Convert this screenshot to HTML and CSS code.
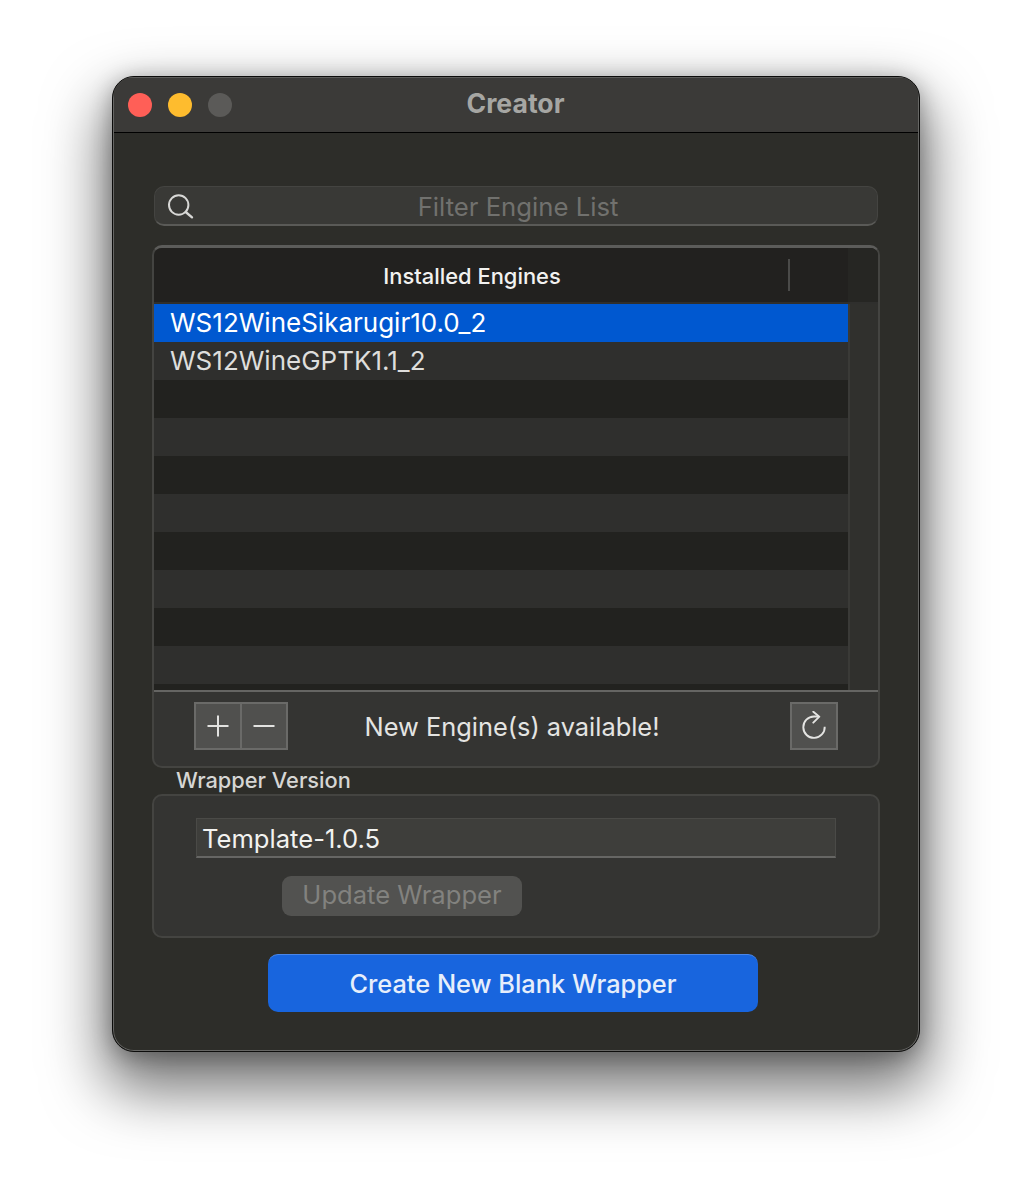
FILE: index.html
```html
<!DOCTYPE html>
<html lang="en">
<head>
<meta charset="utf-8">
<title>Creator</title>
<link rel="stylesheet" href="styles.css">
</head>
<body>
<div class="window">
  <header class="titlebar">
    <div class="lights">
      <span class="light red"></span>
      <span class="light yellow"></span>
      <span class="light gray"></span>
    </div>
    <div class="title">Creator</div>
  </header>
  <main class="content">
    <div class="search">
      <svg class="search-icon" width="28" height="28" viewBox="0 0 28 28" fill="none" stroke="#d8d8d6" stroke-width="2">
        <circle cx="11.7" cy="13" r="9.7"/>
        <path d="M18.7 20 L25 25.3" stroke-width="2.4" stroke-linecap="round"/>
      </svg>
      <span class="search-text">Filter Engine List</span>
    </div>
    <section class="engines">
      <div class="table">
        <div class="thead">
          <div class="th">Installed Engines</div>
          <div class="th-sep"></div>
          <div class="th-corner"></div>
        </div>
        <div class="tbody">
          <div class="rows">
            <div class="row selected">WS12WineSikarugir10.0_2</div>
            <div class="row alt">WS12WineGPTK1.1_2</div>
            <div class="row"></div>
            <div class="row alt"></div>
            <div class="row"></div>
            <div class="row alt"></div>
            <div class="row"></div>
            <div class="row alt"></div>
            <div class="row"></div>
            <div class="row alt"></div>
            <div class="row short"></div>
          </div>
          <div class="scroll-track"></div>
        </div>
      </div>
      <div class="tfoot">
        <div class="segment">
          <button class="seg-btn">
            <svg width="24" height="24" viewBox="0 0 24 24" stroke="#e2e2e0" stroke-width="2" fill="none"><path d="M1.5 12H22.5M12 1.5V22.5"/></svg>
          </button>
          <button class="seg-btn">
            <svg width="24" height="24" viewBox="0 0 24 24" stroke="#e2e2e0" stroke-width="2" fill="none"><path d="M1.5 12H22.5"/></svg>
          </button>
        </div>
        <div class="avail">New Engine(s) available!</div>
        <button class="refresh">
          <svg width="26" height="30" viewBox="0 0 26 30" fill="none" stroke="#e4e4e2" stroke-width="1.9">
            <path d="M18 5.5 H13 A10.7 10.7 0 1 0 23.7 15.7"/>
            <path d="M12.3 0.7 L18.3 5.7 L12.3 11.7" stroke-linecap="round" stroke-linejoin="round"/>
          </svg>
        </button>
      </div>
    </section>
    <div class="group-label">Wrapper Version</div>
    <section class="wrapper-box">
      <div class="version">Template-1.0.5</div>
      <button class="update">Update Wrapper</button>
    </section>
    <button class="create">Create New Blank Wrapper</button>
  </main>
</div>
</body>
</html>
```
FILE: styles.css
```css
* { box-sizing: border-box; }
html, body { margin: 0; height: 1200px; overflow: hidden; background: #fff; }
body {
  padding: 76px 112px 148px;
  font-family: Inter, "Liberation Sans", sans-serif;
}
button { font-family: inherit; padding: 0; margin: 0; }

.window {
  width: 808px;
  height: 976px;
  border: 1px solid #0c0c0b;
  border-radius: 22px;
  background: #2d2d29;
  box-shadow:
    inset 0 0 0 1px #666664,
    0 30px 60px 8px rgba(0,0,0,.55),
    0 4px 22px rgba(0,0,0,.3);
  overflow: hidden;
  display: flex;
  flex-direction: column;
}
.titlebar {
  height: 56px;
  flex: none;
  background: #3b3a38;
  border-top: 1px solid #5c5c5a;
  border-bottom: 1px solid #000;
  margin: 0 1px;
  display: flex;
  align-items: center;
  position: relative;
}
.lights { display: flex; gap: 16px; padding-left: 14px; margin-top: -1px; }
.light { width: 24px; height: 24px; border-radius: 50%; }
.red { background: #ff5f57; }
.yellow { background: #febc2e; }
.gray { background: #5b5a58; }
.title {
  position: absolute;
  left: 0; right: 0; top: 10px;
  text-align: center;
  padding-right: 1px;
  font-size: 26.6px;
  line-height: 30px;
  font-weight: 700;
  color: #a6a6a3;
}
.content {
  flex: 1;
  padding: 53px 0 0 39px;
  display: flex;
  flex-direction: column;
  align-items: flex-start;
}

.search {
  width: 724px;
  height: 40px;
  margin-left: 2px;
  border-radius: 10px;
  background: #393936;
  border: 1px solid #444441;
  border-bottom: 2px solid #5a5a57;
  display: flex;
  align-items: center;
  position: relative;
}
.search-icon { position: absolute; left: 12px; top: 5px; }
.search-text {
  width: 100%;
  text-align: center;
  padding-left: 4px;
  margin-top: 2px;
  font-size: 25.7px;
  color: #71716e;
}

.engines {
  width: 728px;
  height: 523px;
  margin-top: 19px;
  border: 2px solid #444441;
  border-top: 3px solid #5c5c5a;
  border-bottom: 2px solid #444441;
  border-radius: 10px;
  background: #343432;
  overflow: hidden;
  display: flex;
  flex-direction: column;
}
.table { flex: none; height: 444px; display: flex; flex-direction: column; border-bottom: 2px solid #656563; }
.thead {
  height: 56px;
  flex: none;
  background: #22211f;
  border-bottom: 2px solid #2f2f2d;
  display: flex;
  align-items: center;
}
.th {
  width: 636px;
  margin-top: 2px;
  text-align: center;
  font-size: 21.9px;
  font-weight: 500;
  color: #f2f2f0;
}
.th-sep { width: 2px; height: 32px; margin-left: -2px; background: #4b4b49; }
.th-corner { flex: 1; align-self: stretch; margin-left: 58px; background: #262623; }
.tbody { flex: 1; display: flex; overflow: hidden; }
.rows { width: 694px; flex: none; }
.row {
  height: 38px;
  padding-left: 16px;
  font-size: 26px;
  line-height: 38px;
  color: #dededc;
  background: #22221f;
}
.row.alt { background: #2f2f2d; }
.row.short { height: 8px; }
.row.selected { background: #0058d0; color: #fff; }
.scroll-track { flex: 1; background: #30302d; border-left: 2px solid #3a3a37; }

.tfoot { flex: 1; position: relative; display: flex; align-items: flex-start; padding: 10px 0 0 40px; }
.segment {
  width: 94px;
  height: 48px;
  display: flex;
  background: #50504e;
  border: 2px solid #6a6a68;
}
.seg-btn {
  flex: 1;
  border: 0;
  background: transparent;
  display: flex;
  align-items: center;
  justify-content: center;
}
.seg-btn + .seg-btn { border-left: 2px solid #6a6a68; }
.avail {
  width: 448px;
  text-align: center;
  font-size: 25.4px;
  line-height: 50px;
  color: #e4e4e2;
}
.refresh {
  width: 48px;
  height: 48px;
  margin-left: 54px;
  background: #50504e;
  border: 2px solid #6a6a68;
  display: flex;
  align-items: center;
  justify-content: center;
}

.group-label {
  margin: 0 0 0 24px;
  height: 26px;
  font-size: 21.8px;
  line-height: 24px;
  font-weight: 500;
  color: #d6d6d4;
}
.wrapper-box {
  width: 728px;
  height: 144px;
  border: 2px solid #444441;
  border-radius: 10px;
  background: #343432;
  padding: 22px 0 0 42px;
}
.version {
  width: 640px;
  height: 40px;
  padding-left: 5px;
  background: #3e3e3b;
  border: 1px solid #4a4a47;
  border-bottom: 2px solid #666664;
  font-size: 25.6px;
  line-height: 40px;
  color: #f2f2f0;
}
.update {
  display: block;
  width: 240px;
  height: 40px;
  margin: 18px 0 0 86px;
  padding-bottom: 4px;
  border: 0;
  border-radius: 9px;
  background: #525250;
  font-size: 25.6px;
  color: #82827f;
}
.create {
  width: 490px;
  height: 58px;
  margin: 16px 0 0 116px;
  border: 0;
  border-top: 1px solid #4a86e8;
  border-radius: 10px;
  background: #1865de;
  font-size: 25.35px;
  font-weight: 500;
  color: #e6eefb;
}
```
